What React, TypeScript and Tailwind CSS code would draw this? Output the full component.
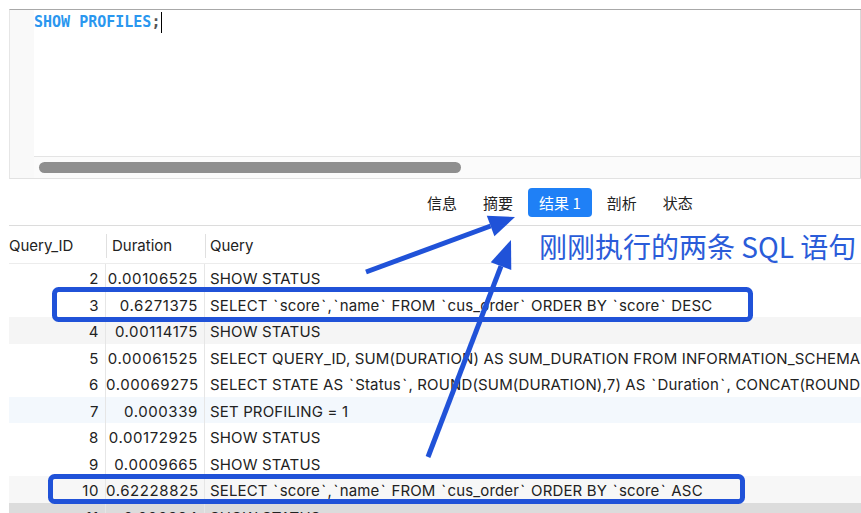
import React from "react"

const rows = [
  { id: 2, dur: "0.00106525", q: "SHOW STATUS", bg: "bg-white" },
  { id: 3, dur: "0.6271375", q: "SELECT `score`,`name` FROM `cus_order` ORDER BY `score` DESC", bg: "bg-white" },
  { id: 4, dur: "0.00114175", q: "SHOW STATUS", bg: "bg-[#f5f5f5]" },
  { id: 5, dur: "0.00061525", q: "SELECT QUERY_ID, SUM(DURATION) AS SUM_DURATION FROM INFORMATION_SCHEMA.PROFILING GROUP BY QUERY_ID", bg: "bg-white" },
  { id: 6, dur: "0.00069275", q: "SELECT STATE AS `Status`, ROUND(SUM(DURATION),7) AS `Duration`, CONCAT(ROUND(SUM(DURATION)/0.000339*100,3), '%')", bg: "bg-white" },
  { id: 7, dur: "0.000339", q: "SET PROFILING = 1", bg: "bg-[#f3f8fd]" },
  { id: 8, dur: "0.00172925", q: "SHOW STATUS", bg: "bg-white" },
  { id: 9, dur: "0.0009665", q: "SHOW STATUS", bg: "bg-white" },
  { id: 10, dur: "0.62228825", q: "SELECT `score`,`name` FROM `cus_order` ORDER BY `score` ASC", bg: "bg-[#f7f7f7]" },
  { id: 11, dur: "0.000394", q: "SHOW STATUS", bg: "bg-[#dcdcdc]" },
]

const tabs = ["信息", "摘要", "结果 1", "剖析", "状态"]

// backticks are wider in the original UI font
const renderQuery = (q: string) =>
  q.split("`").map((part, i) => (
    <React.Fragment key={i}>
      {i > 0 && <span className="mx-[1.3px]">`</span>}
      {part}
    </React.Fragment>
  ))

// arrowhead triangle from tip back along the line
const head = (tx: number, ty: number, fx: number, fy: number, len: number, hw: number) => {
  const dx = tx - fx
  const dy = ty - fy
  const d = Math.hypot(dx, dy)
  const ux = dx / d
  const uy = dy / d
  const bx = tx - ux * len
  const by = ty - uy * len
  return {
    pts: `${tx},${ty} ${bx - uy * hw},${by + ux * hw} ${bx + uy * hw},${by - ux * hw}`,
    bx,
    by,
  }
}

const Annotations = () => {
  const a1 = head(515, 217, 366, 272, 26, 11)
  const a2 = head(511, 240, 428, 457, 28, 11)
  const blue = "#2052d8"
  return (
    <svg className="pointer-events-none absolute left-0 top-0" width="861" height="513">
      <rect x="54.5" y="289.5" width="696" height="30" rx="4" fill="none" stroke={blue} strokeWidth="5" />
      <rect x="50.5" y="476.5" width="692" height="25" rx="4" fill="none" stroke={blue} strokeWidth="5" />
      <line x1="366" y1="272" x2={a1.bx} y2={a1.by} stroke={blue} strokeWidth="5" />
      <polygon points={a1.pts} fill={blue} />
      <line x1="428" y1="457" x2={a2.bx} y2={a2.by} stroke={blue} strokeWidth="5" />
      <polygon points={a2.pts} fill={blue} />
    </svg>
  )
}

export default function App() {
  return (
    <div className="relative h-[513px] w-[861px] overflow-hidden bg-white font-['Inter','Noto_Sans_CJK_SC',sans-serif] text-[#222]">
      <div className="pt-[9px] pl-[9px]">
        {/* editor */}
        <div className="flex h-[170px] border-t border-l border-b border-t-[#a8a8a8] border-l-[#e6e6e6] border-b-[#e2e2e2]">
          <div className="w-[24px] bg-[#f9f9f9]" />
          <div className="flex flex-1 flex-col border-r border-[#d8d8d8]">
            <div className="flex-1">
              <div className="flex h-[25px] items-center font-['DejaVu_Sans_Mono',monospace] text-[15px] font-bold">
                <span className="text-[#2a97ef]">SHOW PROFILES</span>
                <span className="text-[#555]">;</span>
                <div className="ml-[1px] h-[21px] w-[1px] bg-black" />
              </div>
            </div>
            <div className="flex h-[22px] items-center border-t border-[#e4e4e4] bg-[#fbfbfb] pl-[5px]">
              <div className="h-[11px] w-[422px] rounded-full bg-[#8f8f8f]" />
            </div>
          </div>
        </div>

        {/* tabs */}
        <div className="flex h-[46px] items-center gap-[4px] pl-[407px] font-['Noto_Sans_CJK_SC',sans-serif] text-[15px]">
          {tabs.map((t) => (
            <div
              key={t}
              className={
                t === "结果 1"
                  ? "rounded-[4px] bg-[#1f80f6] px-[11px] leading-[29px] text-white"
                  : "px-[11px] leading-[29px] text-[#222]"
              }
            >
              {t}
            </div>
          ))}
        </div>

        {/* table */}
        <div className="border-t border-[#dcdcdc] text-[15px]">
          <div className="flex h-[38px] items-center border-b border-[#ececec] pt-[3px]">
            <div className="w-[97px]">Query_ID</div>
            <div className="h-[24px] w-px bg-[#e0e0e0]" />
            <div className="w-[98px] pl-[5px]">Duration</div>
            <div className="h-[24px] w-px bg-[#e0e0e0]" />
            <div className="pl-[4px]">Query</div>
          </div>
          {rows.map((r) => (
            <div key={r.id} className={`flex h-[26.5px] leading-[24px] ${r.bg}`}>
              <div className="h-full w-[97px] border-r border-[#e6e6e6] pt-[3px] pr-[6px] text-right tracking-[0.6px]">{r.id}</div>
              <div className="h-full w-[99px] border-r border-[#e6e6e6] pt-[3px] pr-[6px] text-right tracking-[0.6px]">{r.dur}</div>
              <div className="h-full flex-1 overflow-hidden whitespace-nowrap pt-[3px] pl-[5px] tracking-[0.15px]">
                {renderQuery(r.q)}
              </div>
            </div>
          ))}
        </div>
      </div>

      <Annotations />
      <div className="absolute left-[539px] top-[226px] font-['Noto_Sans_CJK_SC',sans-serif] text-[28px] leading-[40px] text-[#2a5cd9]">
        刚刚执行的两条 SQL 语句
      </div>
    </div>
  )
}
